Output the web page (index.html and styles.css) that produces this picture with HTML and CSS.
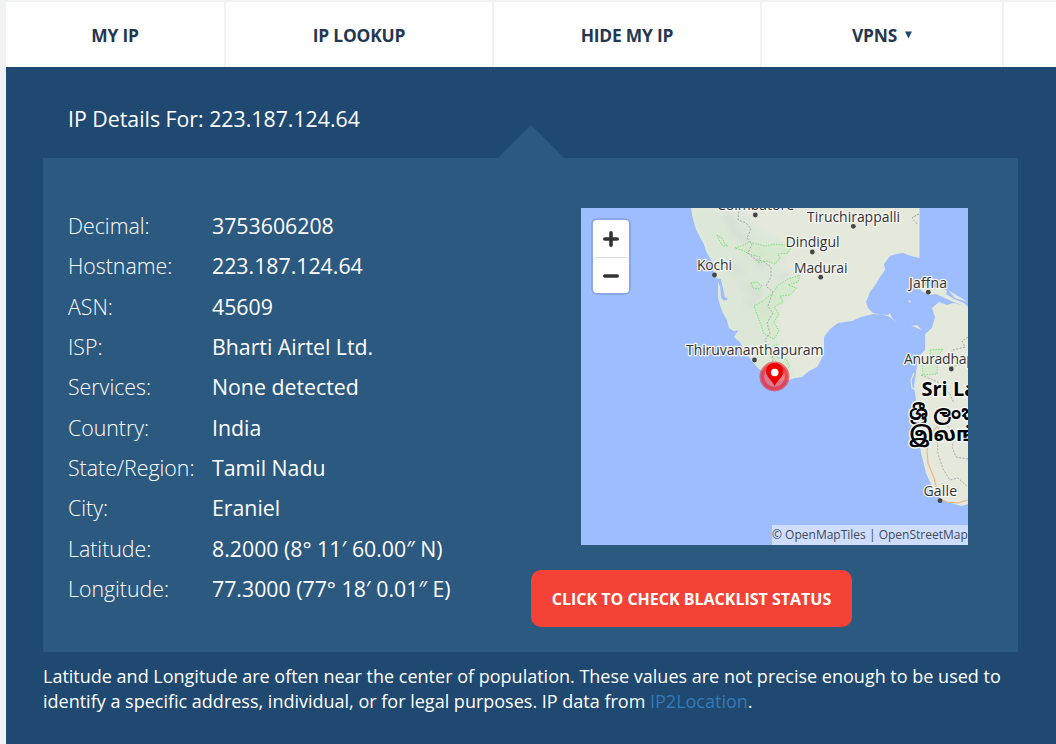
FILE: index.html
```html
<!DOCTYPE html>
<html lang="en">
<head>
<meta charset="utf-8">
<title>IP Details</title>
<link rel="stylesheet" href="styles.css">
</head>
<body>
<nav class="nav">
  <a class="nav-item nav-myip"><span>MY IP</span></a>
  <a class="nav-item nav-lookup"><span>IP LOOKUP</span></a>
  <a class="nav-item nav-hide"><span>HIDE MY IP</span></a>
  <a class="nav-item nav-vpns"><span>VPNS</span><svg class="caret" viewBox="0 0 7 8"><path d="M0 0.5H7L3.5 7.5Z"/></svg></a>
  <a class="nav-item nav-more"></a>
</nav>
<main class="main">
  <h1 class="title"><span>IP Details For: 223.187.124.64</span></h1>
  <section class="panel">
    <svg class="notch" viewBox="0 0 66 33"><path d="M0 33L33 0L66 33Z"/></svg>
    <dl class="details">
      <dt>Decimal:</dt><dd><span>3753606208</span></dd>
      <dt>Hostname:</dt><dd><span>223.187.124.64</span></dd>
      <dt>ASN:</dt><dd><span>45609</span></dd>
      <dt>ISP:</dt><dd><span>Bharti Airtel Ltd.</span></dd>
      <dt>Services:</dt><dd><span>None detected</span></dd>
      <dt>Country:</dt><dd><span>India</span></dd>
      <dt>State/Region:</dt><dd><span>Tamil Nadu</span></dd>
      <dt>City:</dt><dd><span>Eraniel</span></dd>
      <dt>Latitude:</dt><dd><span>8.2000 (8° 11′ 60.00″ N)</span></dd>
      <dt>Longitude:</dt><dd><span>77.3000 (77° 18′ 0.01″ E)</span></dd>
    </dl>
    <div class="side">
      <div class="map">
        <svg class="map-canvas" viewBox="581 208 387 337">
          <defs>
            <filter id="soft"><feGaussianBlur stdDeviation="3"/></filter>
            <clipPath id="india"><path d="M691 208L693 219L696 229L700 237L704 244L706 251L710 258L713 262L713 270L716 278L721 279L723 288L725 297L729 299L724 301L721 298L720 287L718 282L718 297L720 305L723 313L727 320L729 328L734 331L739 330L736 334L734 337L740 342L745 351L752 361L758 368L765 373L777 381L788 380L795 378L802 377L809 371L817 367L821 360L824 352L824 337L830 329L838 323L852 321L861 317L873 314L888 315L890 313L892 318L897 322L888 316L873 313L868 308L866 302L870 292L876 284L880 277L885 270L884 264L890 256L896 254L903 253L911 256L919.5 258V208Z"/></clipPath>
          </defs>
          <path class="sea" d="M581 208H968V545H581Z"/>
          <g clip-path="url(#india)">
            <path class="land" d="M680 200H930V390H680Z"/>
            <path class="hills" filter="url(#soft)" d="M690 208L742 212L763 233L790 245L782 265L776 282L792 290L775 318L782 350L796 382L758 380L738 342L720 310L712 262Z"/>
            <path class="relief" filter="url(#soft)" d="M727 212L735 233L750 242M730 266L742 271M743 284L760 291L748 306M760 313L770 306M753 254L763 266M778 280L790 272"/>
          </g>
          <path class="land" d="M968 307L962 305L953 303L947 305L939 302L932 308L935 317L932 328L925 334L925 350L918 357L916 373L914 387L916 400L917 407L918 430L921 453L926 473L932 487L940 499L950 503L962 506L968 504ZM918 287L923 285L932 288L940 287L947 291L946 294L954 299L964 303L968 307L956 303L947 299L936 294L930 295L923 292ZM908 300L911 301L910 303ZM911 326L917 325L922 330L919 329L915 327ZM948 290L968 302L955 298Z"/>
          <path class="islet" d="M914 373L911 380L912 388L916 390"/>
          <path class="forest" d="M717 235L722 238L725 244L728 246L723 246L719 240ZM735 248L744 245L749 242L765 246L774 244L792 246L788 253L778 254L780 258L775 264L767 261L758 263L760 257L749 254L744 251ZM751 283L757 282L762 286L759 289L753 288ZM754 306L763 301L773 293L778 285L788 279L800 275L798 282L788 285L797 288L790 295L780 296L783 302L774 307L779 314L774 322L779 331L774 339L764 334ZM764 350L777 344L778 358L786 359L790 366L784 374L776 361ZM930 350L943 349L938 356L937 374L923 375L922 365L931 362ZM913 217L918 214"/>
          <path class="border" d="M739 208L738 220L746 223L751 229L747 238L752 244L748 253L756 260L763 261L771 267L771 277L766 286L773 292L768 306L773 313L767 323L770 333L765 340L772 350L773 364M919 214L912 218L918 225M968 337L962 341L965 347L953 350L945 362L950 367L968 363M921 375L938 382L944 389L950 394L954 403M941 421L937 433L938 454L943 469L950 480L958 478L968 487M968 459L956 457L952 447L955 437L945 422"/>
          <path class="road" d="M948 420L938 425L930 436L927 450L928 463L934 478L937 490L940 499L947 502L958 503L968 500"/>
          <g class="dots"><circle cx="755.3" cy="215" r="2.4"/><circle cx="714.5" cy="275" r="2.4"/><circle cx="754.5" cy="360" r="2.4"/><circle cx="853.3" cy="226.3" r="2.4"/><circle cx="812.3" cy="252" r="2.4"/><circle cx="820.7" cy="277.2" r="2.4"/><circle cx="928.3" cy="292.2" r="2.4"/><circle cx="951.3" cy="369" r="2.4"/><circle cx="940" cy="500.7" r="2.4"/></g>
          <g class="label">
            <text x="717" y="210" textLength="77">Coimbatore</text>
            <text x="807" y="222" textLength="93">Tiruchirappalli</text>
            <text x="785.5" y="247" textLength="54">Dindigul</text>
            <text x="794" y="272.5" textLength="53.5">Madurai</text>
            <text x="697" y="270" textLength="35">Kochi</text>
            <text x="686" y="355" textLength="137.5">Thiruvananthapuram</text>
            <text x="909" y="288" textLength="38">Jaffna</text>
            <text x="904" y="364" textLength="92">Anuradhapura</text>
            <text x="923.5" y="496" textLength="33.5">Galle</text>
          </g>
          <g class="country">
            <text x="921.5" y="396">Sri Lanka</text>
            <text x="909" y="420">ශ්‍රී ලංකාව</text>
            <text x="909" y="441">இலங்கை</text>
          </g>
          <circle class="halo-outer" cx="774.5" cy="376.5" r="15"/>
          <circle class="halo-ring" cx="774.5" cy="376.5" r="11.8"/>
          <path class="pin" d="M774.7 386C772 380 766 377 766 371.5A8.7 8.7 0 0 1 783.4 371.5C783.4 377 777.5 380 774.7 386Z"/>
          <circle class="pin-hole" cx="774.7" cy="372.5" r="3.8"/>
        </svg>
        <div class="zoom">
          <div class="zoom-btn"><svg viewBox="0 0 16 16"><path d="M2.5 8H13.5M8 2.5V13.5"/></svg></div>
          <div class="zoom-btn"><svg viewBox="0 0 16 16"><path d="M2.5 8H13.5"/></svg></div>
        </div>
        <div class="credit">© OpenMapTiles | OpenStreetMap</div>
      </div>
      <a class="button"><span>CLICK TO CHECK BLACKLIST STATUS</span></a>
    </div>
  </section>
  <p class="note"><span class="n1">Latitude and Longitude are often near the center of population. These values are not precise enough to be used to</span><br><span class="n2">identify a specific address, individual, or for legal purposes. IP data from <a class="link">IP2Location</a>.</span></p>
</main>
</body>
</html>
```
FILE: styles.css
```css
* { box-sizing: border-box; }
body {
  margin: 0;
  padding: 2px 0 0 6px;
  width: 1056px;
  height: 744px;
  overflow: hidden;
  background: #f1f2f4;
  font-family: "Open Sans", "Noto Sans", sans-serif;
}
.nav {
  display: grid;
  grid-template-columns: 218px 266px 266px 240px 54px;
  column-gap: 2px;
  height: 65px;
  overflow: hidden;
}
.nav-item {
  display: flex;
  align-items: center;
  justify-content: center;
  gap: 8px;
  background: #fff;
  color: #253750;
  font-size: 17.4px;
  font-weight: 700;
  letter-spacing: -0.2px;
}
.nav-myip { padding-right: 0; }
.caret { width: 7px; height: 8px; fill: #1f4971; }
.main {
  height: 677px;
  padding: 37px 38px 0 37px;
  background: #1f4971;
  color: #fff;
}
.title {
  margin: 0 0 24px 25px;
  height: 30px;
  line-height: 30px;
  font-size: 21.3px;
  font-weight: 400;
}
.panel {
  position: relative;
  display: flex;
  width: 975px;
  height: 494px;
  padding: 48px 50px 0 25px;
  background: #2c597f;
}
.notch { position: absolute; left: 455px; top: -33px; width: 66px; height: 33px; fill: #2c597f; }
.details {
  display: grid;
  grid-template-columns: 144px 319px;
  grid-auto-rows: 40.33px;
  margin: 0;
  align-items: center;
  height: 404px;
  font-size: 21.3px;
  line-height: 30px;
  white-space: nowrap;
}
.details dt { font-weight: 300; }
.details dd { margin: 0; font-weight: 500; }
.side { display: flex; flex-direction: column; padding-top: 2px; width: 437px; }
.map { position: relative; margin-left: 50px; width: 387px; height: 337px; overflow: hidden; }
.map-canvas { display: block; width: 387px; height: 337px; }
.sea { fill: #9ebdff; }
.land { fill: #e4e9dc; }
.hills { fill: #dce7d8; }
.relief { fill: none; stroke: #cbd5cb; stroke-width: 4; opacity: 0.65; }
.islet { fill: none; stroke: #e4e9dc; stroke-width: 1.2; }
.forest { fill: #d3e8c9; fill-opacity: 0.7; stroke: #73df77; stroke-width: 0.9; stroke-dasharray: 1.5 1.2; }
.border { fill: none; stroke: #a7a9aa; stroke-width: 1; stroke-dasharray: 2 1.5; }
.road { fill: none; stroke: #f4b184; stroke-width: 1.1; }
.dots { fill: #444; }
.label { font-size: 14px; fill: #333; stroke: #f4f6f4; stroke-width: 2.5px; paint-order: stroke; stroke-linejoin: round; }
.country { font-family: "Open Sans", "Noto Sans", "Noto Sans Sinhala", "Noto Sans Tamil", sans-serif; font-size: 20px; font-weight: 700; fill: #000; stroke: #f4f6f4; stroke-width: 3px; paint-order: stroke; stroke-linejoin: round; }
.halo-outer { fill: #e8283c; fill-opacity: 0.6; }
.halo-ring { fill: #ef9aa0; fill-opacity: 0.4; stroke: #e8202c; stroke-opacity: 0.55; stroke-width: 3; }
.pin { fill: #f00000; }
.pin-hole { fill: #fff; }
.zoom {
  position: absolute;
  left: 12px;
  top: 12px;
  width: 36px;
  height: 73px;
  border-radius: 4px;
  background: #fff;
  box-shadow: 0 0 0 2px rgba(0, 0, 0, 0.1);
}
.zoom-btn { display: flex; align-items: center; justify-content: center; height: 37px; }
.zoom-btn + .zoom-btn { height: 36px; border-top: 1px solid #ddd; border-radius: 4px; }
.zoom-btn svg { width: 18px; height: 18px; fill: none; stroke: #333; stroke-width: 3.2; stroke-linecap: round; }
.credit {
  position: absolute;
  right: 0;
  bottom: 0;
  width: 196px;
  height: 20px;
  padding-right: 6px;
  text-align: right;
  font-size: 12px;
  line-height: 20px;
  white-space: nowrap;
  color: #404b5c;
  background: rgba(255, 255, 255, 0.5);
}
.button {
  display: flex;
  align-items: center;
  justify-content: center;
  width: 321px;
  height: 57px;
  margin-top: 25px;
  border-radius: 10px;
  background: #f44336;
  font-size: 16px;
  font-weight: 700;
  white-space: nowrap;
}
.note { margin: 12px 0 0; font-size: 18px; line-height: 25px; white-space: nowrap; }
.link { color: #337ab7; }
```
